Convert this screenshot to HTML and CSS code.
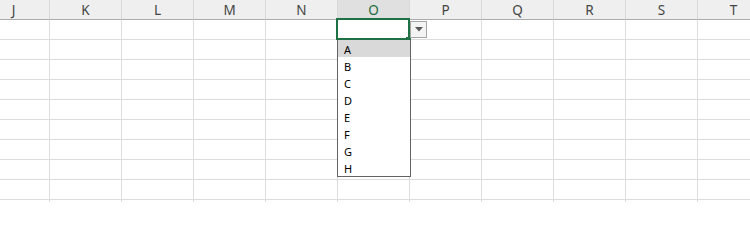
FILE: index.html
```html
<!DOCTYPE html>
<html>
<head>
<meta charset="utf-8">
<link rel="stylesheet" href="styles.css">
</head>
<body>
<div class="sheet">
  <div class="row head">
    <div class="hcell">J</div>
    <div class="hcell">K</div>
    <div class="hcell">L</div>
    <div class="hcell">M</div>
    <div class="hcell">N</div>
    <div class="hcell active">O</div>
    <div class="hcell">P</div>
    <div class="hcell">Q</div>
    <div class="hcell">R</div>
    <div class="hcell">S</div>
    <div class="hcell">T</div>
  </div>
  <div class="row"><div class="cell"></div><div class="cell"></div><div class="cell"></div><div class="cell"></div><div class="cell"></div><div class="cell"></div><div class="cell"></div><div class="cell"></div><div class="cell"></div><div class="cell"></div><div class="cell"></div></div>
  <div class="row"><div class="cell"></div><div class="cell"></div><div class="cell"></div><div class="cell"></div><div class="cell"></div><div class="cell"></div><div class="cell"></div><div class="cell"></div><div class="cell"></div><div class="cell"></div><div class="cell"></div></div>
  <div class="row"><div class="cell"></div><div class="cell"></div><div class="cell"></div><div class="cell"></div><div class="cell"></div><div class="cell"></div><div class="cell"></div><div class="cell"></div><div class="cell"></div><div class="cell"></div><div class="cell"></div></div>
  <div class="row"><div class="cell"></div><div class="cell"></div><div class="cell"></div><div class="cell"></div><div class="cell"></div><div class="cell"></div><div class="cell"></div><div class="cell"></div><div class="cell"></div><div class="cell"></div><div class="cell"></div></div>
  <div class="row"><div class="cell"></div><div class="cell"></div><div class="cell"></div><div class="cell"></div><div class="cell"></div><div class="cell"></div><div class="cell"></div><div class="cell"></div><div class="cell"></div><div class="cell"></div><div class="cell"></div></div>
  <div class="row"><div class="cell"></div><div class="cell"></div><div class="cell"></div><div class="cell"></div><div class="cell"></div><div class="cell"></div><div class="cell"></div><div class="cell"></div><div class="cell"></div><div class="cell"></div><div class="cell"></div></div>
  <div class="row"><div class="cell"></div><div class="cell"></div><div class="cell"></div><div class="cell"></div><div class="cell"></div><div class="cell"></div><div class="cell"></div><div class="cell"></div><div class="cell"></div><div class="cell"></div><div class="cell"></div></div>
  <div class="row"><div class="cell"></div><div class="cell"></div><div class="cell"></div><div class="cell"></div><div class="cell"></div><div class="cell"></div><div class="cell"></div><div class="cell"></div><div class="cell"></div><div class="cell"></div><div class="cell"></div></div>
  <div class="row"><div class="cell"></div><div class="cell"></div><div class="cell"></div><div class="cell"></div><div class="cell"></div><div class="cell"></div><div class="cell"></div><div class="cell"></div><div class="cell"></div><div class="cell"></div><div class="cell"></div></div>
  <div class="row"><div class="cell"></div><div class="cell"></div><div class="cell"></div><div class="cell"></div><div class="cell"></div><div class="cell"></div><div class="cell"></div><div class="cell"></div><div class="cell"></div><div class="cell"></div><div class="cell"></div></div>
</div>
<div class="selection"></div>
<div class="handle"></div>
<div class="dd-button"><svg width="8" height="5" viewBox="0 0 8 5"><path d="M0 0H8L4 4.5Z" fill="#5a5a5a"/></svg></div>
<ul class="dd-list">
  <li class="hl">A</li>
  <li>B</li>
  <li>C</li>
  <li>D</li>
  <li>E</li>
  <li>F</li>
  <li>G</li>
  <li>H</li>
</ul>
</body>
</html>
```
FILE: styles.css
```css
html, body {
  margin: 0;
  padding: 0;
  background: #ffffff;
  overflow: hidden;
  width: 750px;
  height: 202px;
}
body {
  position: relative;
  font-family: "Noto Sans", "Open Sans", sans-serif;
}
.sheet {
  margin-left: -22px;
  width: 800px;
}
.row {
  display: flex;
}
.hcell {
  flex: 0 0 72px;
  box-sizing: border-box;
  height: 20px;
  background: #efefef;
  border-right: 1px solid #d8d8d8;
  border-bottom: 1px solid #ababab;
  text-align: center;
  font-size: 13.5px;
  line-height: 21px;
  color: #444444;
}
.hcell.active {
  background: #e0e0e0;
  color: #1d6b3f;
}
.cell {
  flex: 0 0 72px;
  box-sizing: border-box;
  height: 20px;
  border-right: 1px solid #dcdcdc;
  border-bottom: 1px solid #dcdcdc;
}
.selection {
  position: absolute;
  left: 336px;
  top: 18px;
  width: 74px;
  height: 22px;
  box-sizing: border-box;
  border: 2px solid #1e7145;
}
.handle {
  position: absolute;
  left: 406px;
  top: 37px;
  width: 5px;
  height: 4px;
  background: #1e7145;
}
.dd-button {
  position: absolute;
  left: 410px;
  top: 21px;
  width: 17px;
  height: 17px;
  box-sizing: border-box;
  border: 1px solid #a6a6a6;
  background: #f4f4f4;
  display: flex;
  align-items: center;
  justify-content: center;
}
.dd-button svg {
  display: block;
}
.dd-list {
  position: absolute;
  left: 337px;
  top: 40px;
  width: 74px;
  margin: 0;
  padding: 0;
  list-style: none;
  box-sizing: border-box;
  border: 1px solid #646464;
  border-top: none;
  background: #ffffff;
}
.dd-list li {
  height: 16px;
  padding-top: 1px;
  line-height: 18px;
  padding-left: 6px;
  font-size: 11px;
  color: #000000;
}
.dd-list li.hl {
  background: #d9d9d9;
}
```
